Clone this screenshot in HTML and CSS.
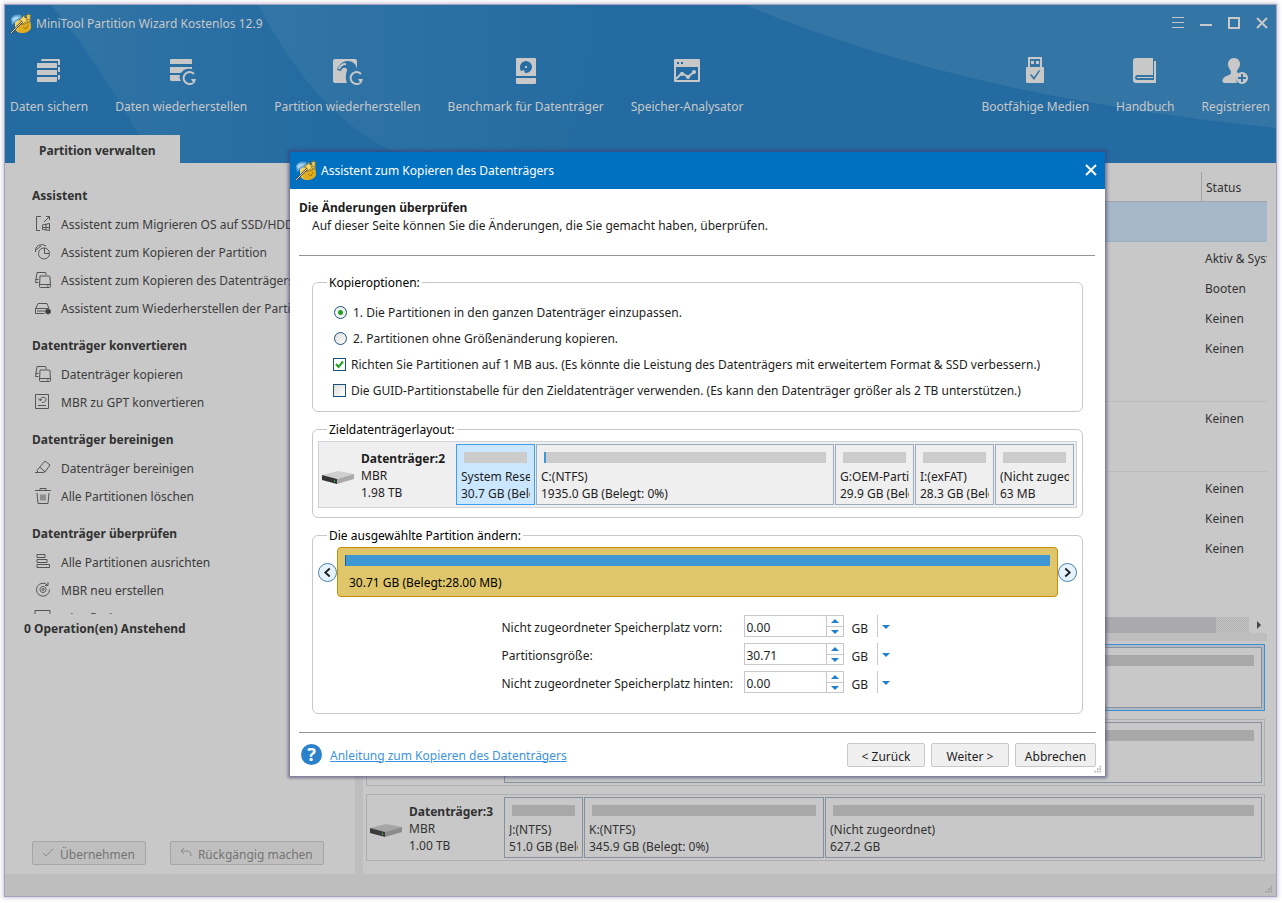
FILE: index.html
```html
<!DOCTYPE html>
<html lang="de">
<head>
<meta charset="utf-8">
<meta name="viewport" content="width=device-width, initial-scale=1">
<title>MiniTool Partition Wizard Kostenlos 12.9</title>
<link rel="stylesheet" href="styles.css">
</head>
<body>
<svg class="sprite" aria-hidden="true">
  <defs>
    <linearGradient id="gold" x1="0" y1="0" x2="1" y2="1"><stop offset="0" stop-color="#ffe680"/><stop offset="1" stop-color="#d99a00"/></linearGradient>
    <symbol id="logo" viewBox="0 0 22 22">
      <path d="M5 9l6-4 9 3 1 7c0 4-5 6-9 6-4 0-6-2-7-4z" fill="url(#gold)"/>
      <path d="M1 7c1-4 6-5 10-4l1 4-5 2-5 4z" fill="#5fa3d4"/>
      <path d="M2 7c2-3 5-3 8-2L6 8l-3 2z" fill="#a9d3ec"/>
      <path d="M9 13c4 1 8 0 11-3l1 5c-1 4-8 7-13 4z" fill="#dfae20"/>
      <path d="M9 12c4 1 8 0 11-3" stroke="#9c7412" stroke-width="1" fill="none"/>
      <path d="M1 21L14 8" stroke="#4c4a42" stroke-width="2"/>
      <path d="M1 21L14 8" stroke="#cfcbbd" stroke-width="1"/>
      <path d="M14 3l1 3 3-1-2 3 2 2-3 0-2 2-1-3-3-1 3-2z" fill="#f5d964" stroke="#7a6224" stroke-width=".6"/>
      <path d="M18 1l1 2 2 0-1 2 1 3-2-1-2 1 0-3-1-2 2 0z" fill="#eccb52" stroke="#7a6224" stroke-width=".4"/>
      <path d="M13 15l3 2 2-4" stroke="#a87800" fill="none"/>
    </symbol>
    <symbol id="hdd" viewBox="0 0 32 14">
      <path d="M0 4L16 0l16 3-17 5z" fill="var(--hdd-top)"/>
      <path d="M0 4l15 4v5L0 9z" fill="var(--hdd-front)"/>
      <path d="M15 8l17-5v5l-17 5z" fill="var(--hdd-side)"/>
      <path d="M12 9h1v2h-1z" fill="#2fb02f"/>
    </symbol>
    <symbol id="copy" viewBox="0 0 18 18">
      <path d="M12 4V2.500a1 1 0 0 0-1-1H3L1.500 11.500h3M1.500 8.500h3M6 5h9a1 1 0 0 1 1 1l.5 9.500a1 1 0 0 1-1 1h-9a1 1 0 0 1-1-1zM5 13.500h11.500M13 15h1.500"/>
    </symbol>
    <symbol id="resize" viewBox="0 0 12 12"><path d="M9 1h2v2H9zM6 4h2v2H6zM9 4h2v2H9zM3 7h2v2H3zM6 7h2v2H6zM9 7h2v2H9z"/></symbol>
  </defs>
</svg>

<div class="app">
  <header class="header">
    <svg class="swoosh" viewBox="0 0 1271 158" preserveAspectRatio="none" aria-hidden="true">
      <defs>
        <linearGradient id="s1"><stop offset="0" stop-color="#3275a6"/><stop offset="1" stop-color="#246ba1"/></linearGradient>
      </defs>
      <path d="M46 0H320L310 158H150C115 95 80 40 46 0z" fill="url(#s1)"/>
      <path d="M253 0C285 60 325 115 385 145L420 158H560L600 0z" fill="url(#s1)"/>
      <path d="M740 0C850 45 1000 95 1271 123V0z" fill="#3375a5"/>
    </svg>
    <div class="titlebar">
      <svg class="logo"><use href="#logo"/></svg>
      <h1 class="app-title">MiniTool Partition Wizard Kostenlos 12.9</h1>
      <div class="window-controls">
        <button class="win-btn" aria-label="Menü"><svg viewBox="0 0 14 14"><path d="M1 1.500h12M1 6.500h12M1 11.500h12"/></svg></button>
        <button class="win-btn" aria-label="Minimieren"><svg viewBox="0 0 14 14"><path d="M1 9h12" stroke-width="2"/></svg></button>
        <button class="win-btn" aria-label="Maximieren"><svg viewBox="0 0 14 14"><path d="M2 2h10v10H2z" stroke-width="2"/></svg></button>
        <button class="win-btn" aria-label="Schließen"><svg viewBox="0 0 14 14"><path d="M2 2l10 10M12 2L2 12" stroke-width="2"/></svg></button>
      </div>
    </div>
    <nav class="toolbar">
      <button class="tool"><svg viewBox="0 0 28 28"><path d="M7 2h17a1 1 0 0 1 1 1v5h-2V4H6V3zM23 10h2v5h-2zM23 18h2v4l-2 1zM2 6h19a1 1 0 0 1 1 1v4H2V7zM2 13h20v5H2zM2 20h20v4a1 1 0 0 1-1 1H3a1 1 0 0 1-1-1z"/></svg>Daten sichern</button>
      <button class="tool"><svg viewBox="0 0 28 28"><path d="M4 2h20a1 1 0 0 1 1 1v4H3V3a1 1 0 0 1 1-1zM3 10h22v2c-4-1-9 0-11 4H3zM3 18h10c-1 2 0 5 1 6H4l-1-1z"/><path class="line" d="M27 17a6 6 0 1 0-1 9"/><path d="M24 22h5l-2 5z"/></svg>Daten wiederherstellen</button>
      <button class="tool"><svg viewBox="0 0 28 28"><path fill-rule="evenodd" d="M2 2h20a2 2 0 0 1 2 2v9c0-6-5-9-9-9-6 0-10 5-11 9l4 1c1-4 5-4 6-1-1 4-2 8 0 13H2a2 2 0 0 1-2-2V4a2 2 0 0 1 2-2z"/><path class="line" d="M6 12c1-3 4-5 7-5"/><circle cx="12" cy="13" r="2"/><path class="line" d="M28 17a6 6 0 1 0-1 9"/><path d="M25 22h5l-2 5z"/></svg>Partition wiederherstellen</button>
      <button class="tool"><svg viewBox="0 0 28 28"><path fill-rule="evenodd" d="M5 1h18a1 1 0 0 1 1 1v17H4V2a1 1 0 0 1 1-1zM8 10a6 6 0 1 1 6 6h-1l-1-3-3 1a6 6 0 0 1-1-4zM4 21h20v5a1 1 0 0 1-1 1H5a1 1 0 0 1-1-1z"/><path d="M13 9h2v2h-2z"/></svg>Benchmark für Datenträger</button>
      <button class="tool"><svg viewBox="0 0 28 28"><path fill-rule="evenodd" d="M2 2h24a1 1 0 0 1 1 1v21a1 1 0 0 1-1 1H2a1 1 0 0 1-1-1V3a1 1 0 0 1 1-1zM4 5v2h2V5zM8 5v2h2V5zM3 10v13h22V10z"/><path class="line" d="M3 22l6-6 6 4 7-6"/><circle cx="9" cy="17" r="2"/><circle cx="15" cy="20" r="2"/><circle cx="21" cy="15" r="2"/></svg>Speicher-Analysator</button>
      <span class="spacer"></span>
      <button class="tool"><svg viewBox="0 0 28 28"><path fill-rule="evenodd" d="M7 0h14v10h1a1 1 0 0 1 1 1v14a1 1 0 0 1-1 1H6a1 1 0 0 1-1-1V11a1 1 0 0 1 1-1h1zM9 2v8h10V2zM9 18l4 5 6-9-1-1-5 7-3-3z"/><path d="M10 4h3v3h-3zM15 4h3v3h-3z"/></svg>Bootfähige Medien</button>
      <button class="tool"><svg viewBox="0 0 28 28"><path fill-rule="evenodd" d="M5 1h17v17H6c-2 0-3 5 0 5h17V4h2v22H5c-2 0-3-1-3-3V4c0-2 1-3 3-3z"/><path d="M6 20h16v1H6z"/></svg>Handbuch</button>
      <button class="tool"><svg viewBox="0 0 28 28"><path d="M12 1c4 0 6 3 6 6 0 4-3 5-3 8l2 2c-3 2-3 6-2 9H3c-4 0-3-5 1-7 3-1 5-1 5-4 0-2-3-4-3-8 0-3 2-6 6-6z"/><path fill-rule="evenodd" d="M20 15a6 6 0 1 1 0 12 6 6 0 0 1 0-12zM19 17v3h-3v2h3v3h2v-3h3v-2h-3v-3z"/></svg>Registrieren</button>
    </nav>
    <div class="tabs"><button class="tab">Partition verwalten</button></div>
  </header>

  <main class="main">
    <aside class="sidebar">
      <div class="actions">
        <section class="group">
          <h2>Assistent</h2>
          <a href="#"><svg viewBox="0 0 18 18"><path d="M7 1.500H2.500v14H6M10 7l5-5M12 1.500h3.500V5M8.500 10l7-1.500v7l-7-1zM12 9v6M8.500 12.500h7"/></svg>Assistent zum Migrieren OS auf SSD/HDD</a>
          <a href="#"><svg viewBox="0 0 18 18"><path d="M1.500 9A6.500 6.500 0 0 1 12 3M2 7l5-4"/><circle cx="10" cy="10.500" r="5.500"/><path d="M10.500 5v5.500H15"/></svg>Assistent zum Kopieren der Partition</a>
          <a href="#"><svg><use href="#copy"/></svg>Assistent zum Kopieren des Datenträgers</a>
          <a href="#"><svg viewBox="0 0 18 18"><path d="M4 4.500h9l2 5M4 4.500L1.500 10v4.500h9M1.500 9.500h13M3 12h8"/><circle cx="14" cy="12.500" r="2.500" fill="#3c3c3c"/></svg>Assistent zum Wiederherstellen der Partition</a>
        </section>
        <section class="group">
          <h2>Datenträger konvertieren</h2>
          <a href="#"><svg><use href="#copy"/></svg>Datenträger kopieren</a>
          <a href="#"><svg viewBox="0 0 18 18"><path d="M1.500 1.500h13v14h-13zM4 12.500h8M6 7.500c0-4 6-4 6-1 0 2-2 3-4 3M4.500 5.500l1.500 2 2-1"/></svg>MBR zu GPT konvertieren</a>
        </section>
        <section class="group">
          <h2>Datenträger bereinigen</h2>
          <a href="#"><svg viewBox="0 0 18 18"><path d="M5 9l6-7 5 4-5 7-3 .5H4l-1-2zM6 8.500l5 4M1 13.500h7"/></svg>Datenträger bereinigen</a>
          <a href="#"><svg viewBox="0 0 18 18"><path d="M1 3.500h16M6 3V1.500h6V3M3 6l1 10.500h10L15 6M7 7.500v6M9 7.500v6M11 7.500v6"/></svg>Alle Partitionen löschen</a>
        </section>
        <section class="group">
          <h2>Datenträger überprüfen</h2>
          <a href="#"><svg viewBox="0 0 18 18"><path d="M3 1.500h8v3H3zM3 6.500h10v3H3zM3 11.500h12.500v3H3z"/></svg>Alle Partitionen ausrichten</a>
          <a href="#"><svg viewBox="0 0 18 18"><path d="M13.500 4a6.500 6.500 0 1 0 2 4.500M14 1v3.500h-3M9 5.500a3 3 0 1 0 .01 0z"/><circle cx="9" cy="8.500" r="1"/></svg>MBR neu erstellen</a>
          <a href="#"><svg viewBox="0 0 18 18"><path d="M1 1.500h15v13H1z"/></svg>Oberflächentest</a>
        </section>
      </div>
      <div class="pending">
        <h2>0 Operation(en) Anstehend</h2>
        <div class="pending-buttons">
          <button class="btn-dim" disabled><svg viewBox="0 0 12 12"><path d="M1 6l3 3 7-7"/></svg>Übernehmen</button>
          <button class="btn-dim" disabled><svg viewBox="0 0 12 12"><path d="M4 1L1 4l3 3M1 4h6c3 0 4 2 4 5"/></svg>Rückgängig machen</button>
        </div>
      </div>
    </aside>
    <div class="splitter"></div>
    <section class="content">
      <div class="table-wrap">
        <table class="parts">
          <thead><tr><th></th><th class="status">Status</th></tr></thead>
          <tbody>
            <tr class="disk-row selected"><td colspan="2"></td></tr>
            <tr><td></td><td>Aktiv &amp; System</td></tr>
            <tr><td></td><td>Booten</td></tr>
            <tr><td></td><td>Keinen</td></tr>
            <tr><td></td><td>Keinen</td></tr>
            <tr class="disk-row"><td colspan="2"></td></tr>
            <tr><td></td><td>Keinen</td></tr>
            <tr class="disk-row"><td colspan="2"></td></tr>
            <tr><td></td><td>Keinen</td></tr>
            <tr><td></td><td>Keinen</td></tr>
            <tr><td></td><td>Keinen</td></tr>
          </tbody>
        </table>
      </div>
      <div class="scrollbar"><span class="thumb"></span><span class="track"></span><svg viewBox="0 0 18 16"><path d="M8 4l4 4-4 4z"/></svg></div>
      <div class="hsplit"></div>
      <div class="diskmap">
        <div class="disk active">
          <div class="disk-info"></div>
          <div class="part wide"><span class="bar"></span></div>
        </div>
        <div class="disk">
          <div class="disk-info"></div>
          <div class="part wide"><span class="bar"></span></div>
        </div>
        <div class="disk">
          <div class="disk-info"><svg class="hdd"><use href="#hdd"/></svg><p><b>Datenträger:3</b><br>MBR<br>1.00 TB</p></div>
          <div class="part small"><span class="bar"></span><p>J:(NTFS)<br>51.0 GB (Belegt: 0%)</p></div>
          <div class="part mid"><span class="bar"></span><p>K:(NTFS)<br>345.9 GB (Belegt: 0%)</p></div>
          <div class="part wide"><span class="bar"></span><p>(Nicht zugeordnet)<br>627.2 GB</p></div>
        </div>
      </div>
    </section>
  </main>
  <footer class="statusbar"><svg class="grip"><use href="#resize"/></svg></footer>
</div>

<div class="dialog" role="dialog" aria-labelledby="dlg-title">
  <div class="dlg-bar">
    <svg class="logo"><use href="#logo"/></svg>
    <h2 id="dlg-title">Assistent zum Kopieren des Datenträgers</h2>
    <button class="win-btn close" aria-label="Dialog schließen"><svg viewBox="0 0 14 14"><path d="M2 2l10 10M12 2L2 12" stroke-width="2"/></svg></button>
  </div>
  <div class="dlg-head">
    <h3>Die Änderungen überprüfen</h3>
    <p>Auf dieser Seite können Sie die Änderungen, die Sie gemacht haben, überprüfen.</p>
  </div>
  <div class="dlg-body">
    <fieldset class="options">
      <legend>Kopieroptionen:</legend>
      <label class="opt"><input type="radio" name="mode" checked>1. Die Partitionen in den ganzen Datenträger einzupassen.</label>
      <label class="opt"><input type="radio" name="mode">2. Partitionen ohne Größenänderung kopieren.</label>
      <label class="opt"><input type="checkbox" checked>Richten Sie Partitionen auf 1 MB aus. (Es könnte die Leistung des Datenträgers mit erweitertem Format &amp; SSD verbessern.)</label>
      <label class="opt"><input type="checkbox">Die GUID-Partitionstabelle für den Zieldatenträger verwenden. (Es kann den Datenträger größer als 2 TB unterstützen.)</label>
    </fieldset>
    <fieldset class="layout">
      <legend>Zieldatenträgerlayout:</legend>
      <div class="disk">
        <div class="disk-info"><svg class="hdd"><use href="#hdd"/></svg><p><b>Datenträger:2</b><br>MBR<br>1.98 TB</p></div>
        <div class="part small picked"><span class="bar"></span><p>System Reserved<br>30.7 GB (Belegt: 0%)</p></div>
        <div class="part wide"><span class="bar used"></span><p>C:(NTFS)<br>1935.0 GB (Belegt: 0%)</p></div>
        <div class="part small"><span class="bar"></span><p>G:OEM-Partition<br>29.9 GB (Belegt: 0%)</p></div>
        <div class="part small"><span class="bar"></span><p>I:(exFAT)<br>28.3 GB (Belegt: 0%)</p></div>
        <div class="part small"><span class="bar"></span><p>(Nicht zugeordnet)<br>63 MB</p></div>
      </div>
    </fieldset>
    <fieldset class="resize">
      <legend>Die ausgewählte Partition ändern:</legend>
      <div class="slider">
        <button class="round" aria-label="Links"><svg viewBox="0 0 19 19"><path d="M12 5L7 9.500 12 14"/></svg></button>
        <div class="gold"><span></span><p>30.71 GB (Belegt:28.00 MB)</p></div>
        <button class="round" aria-label="Rechts"><svg viewBox="0 0 19 19"><path d="M7 5l5 4.500L7 14"/></svg></button>
      </div>
      <div class="sizes">
        <label for="before">Nicht zugeordneter Speicherplatz vorn:</label>
        <div class="spin"><input id="before" type="text" value="0.00"><div class="steps"><button aria-label="Mehr"><svg viewBox="0 0 8 4"><path d="M0 4l4-4 4 4z"/></svg></button><button aria-label="Weniger"><svg viewBox="0 0 8 4"><path d="M0 0h8L4 4z"/></svg></button></div></div>
        <div class="unit"><select aria-label="Einheit vorn"><option>GB</option></select><svg viewBox="0 0 8 4"><path d="M0 0h8L4 4z"/></svg></div>
        <label for="size">Partitionsgröße:</label>
        <div class="spin"><input id="size" type="text" value="30.71"><div class="steps"><button aria-label="Mehr"><svg viewBox="0 0 8 4"><path d="M0 4l4-4 4 4z"/></svg></button><button aria-label="Weniger"><svg viewBox="0 0 8 4"><path d="M0 0h8L4 4z"/></svg></button></div></div>
        <div class="unit"><select aria-label="Einheit Größe"><option>GB</option></select><svg viewBox="0 0 8 4"><path d="M0 0h8L4 4z"/></svg></div>
        <label for="after">Nicht zugeordneter Speicherplatz hinten:</label>
        <div class="spin"><input id="after" type="text" value="0.00"><div class="steps"><button aria-label="Mehr"><svg viewBox="0 0 8 4"><path d="M0 4l4-4 4 4z"/></svg></button><button aria-label="Weniger"><svg viewBox="0 0 8 4"><path d="M0 0h8L4 4z"/></svg></button></div></div>
        <div class="unit"><select aria-label="Einheit hinten"><option>GB</option></select><svg viewBox="0 0 8 4"><path d="M0 0h8L4 4z"/></svg></div>
      </div>
    </fieldset>
  </div>
  <div class="dlg-foot">
    <span class="help">?</span>
    <a href="#">Anleitung zum Kopieren des Datenträgers</a>
    <span class="spacer"></span>
    <button class="btn">&lt; Zurück</button>
    <button class="btn">Weiter &gt;</button>
    <button class="btn wide">Abbrechen</button>
  </div>
  <svg class="grip"><use href="#resize"/></svg>
</div>
</body>
</html>
```
FILE: styles.css
```css
* { box-sizing: border-box; }
body {
  margin: 0;
  background: #fff;
  font: 12px/18px "Noto Sans", sans-serif;
  color: #323232;
}
h1, h2, h3, p { margin: 0; font-size: inherit; }
button, input, select { font: inherit; color: inherit; }
button { border: 0; padding: 0; background: none; }
svg { display: block; flex: none; }
.sprite { position: absolute; width: 0; height: 0; }
.spacer { flex: 1; }

.app {
  display: flex;
  flex-direction: column;
  height: calc(100vh - 12px);
  margin: 5px 6px 7px 5px;
  overflow: hidden;
  background: #c8c8c8;
  box-shadow: 0 0 0 1px #a3a3bd, 0 0 4px 2px #c6c6da;
}

.header { position: relative; background: #246ba1; color: #c8c8c8; flex: none; }
.swoosh { position: absolute; inset: 0; width: 100%; height: 100%; }
.titlebar, .toolbar, .tabs { position: relative; display: flex; }
.titlebar { align-items: center; height: 36px; padding: 0 6px 0 5px; gap: 4px; }
.logo { width: 22px; height: 22px; }
.app-title { font-weight: 400; flex: 1; padding-top: 2px; }
.window-controls { display: flex; gap: 14px; margin-right: 1px; }
.win-btn svg { width: 14px; height: 14px; fill: none; stroke: currentColor; }
.toolbar { gap: 27px; padding: 16px 6px 0 5px; height: 94px; white-space: nowrap; }
.tool { display: flex; flex-direction: column; align-items: center; gap: 13px; height: 60px; }
.tool svg { width: 28px; height: 28px; fill: #c8c8c8; overflow: visible; }
.tool .line { fill: none; stroke: #c8c8c8; stroke-width: 2; }
.tabs { padding-left: 10px; }
.tab { height: 28px; padding: 4px 24px 0; background: #c8c8c8; color: #323232; font-weight: 700; }

.main { display: flex; flex: 1; min-height: 0; }
.sidebar { width: 350px; display: flex; flex-direction: column; flex: none; }
.actions { flex: 1; min-height: 0; overflow: hidden; padding: 17px 0 0 27px; }
.group { margin-bottom: 8px; }
.group h2 { height: 30px; line-height: 32px; }
.group a { display: flex; align-items: center; gap: 9px; height: 28px; padding: 2px 0 0 2px; color: #3c3c3c; text-decoration: none; white-space: nowrap; }
.group svg { width: 18px; height: 18px; margin-bottom: 2px; fill: none; stroke: #555; }
.pending { flex: none; height: 260px; display: flex; flex-direction: column; justify-content: space-between; padding: 6px 0 9px 19px; }
.pending-buttons { display: flex; gap: 24px; padding-left: 8px; }
.btn-dim { display: flex; align-items: center; gap: 6px; height: 24px; padding: 4px 10px 0 9px; border: 1px solid #a6a6a6; border-radius: 2px; background: #bfbfbf; color: #747474; }
.btn-dim svg { width: 12px; height: 12px; margin-bottom: 4px; fill: none; stroke: #8a8a8a; stroke-width: 1; }
.splitter { width: 8px; background: #bebebe; flex: none; }

.content { flex: 1; min-width: 0; display: flex; flex-direction: column; padding-right: 9px; }
.table-wrap { flex: 1; min-height: 0; overflow: hidden; }
.parts { width: 100%; border-collapse: collapse; table-layout: fixed; }
.parts th { height: 38px; padding: 12px 0 0; border-bottom: 1px solid #a4a4a4; font-weight: 400; text-align: left; }
.parts .status { width: 66px; padding-left: 5px; background: linear-gradient(#a4a4a4, #a4a4a4) 0 9px / 1px 100% no-repeat; }
.parts td { height: 30px; padding: 6px 0 0 4px; white-space: nowrap; overflow: hidden; }
.parts .disk-row td { height: 40px; border-bottom: 1px solid #bcbcbc; }
.parts .selected td { background: #a6b7c9; border-bottom-color: #9fb0c2; }
.scrollbar { display: flex; height: 16px; flex: none; }
.thumb { flex: 1; background: #aaaaac; }
.track { width: 33px; background: repeating-conic-gradient(#b0b0b0 0 25%, #c6c6c6 0 50%) 0 0 / 2px 2px; }
.scrollbar svg { width: 18px; height: 16px; fill: #444; }
.hsplit { height: 8px; background: #bebebe; flex: none; }
.diskmap { display: flex; flex-direction: column; gap: 8px; padding: 3px 2px 13px 3px; flex: none; }

.disk { --hdd-top: #a6a6a6; --hdd-front: #3c3c3c; --hdd-side: #8c8c8c; display: flex; gap: 1px; height: 67px; padding: 2px; border: 1px solid #adadb2; line-height: 17px; white-space: nowrap; }
.disk.active { border-color: #3f8fcf; background: #adbbc9; }
.disk.active .part, .disk.active .disk-info { background: #c8c8c8; }
.disk-info { display: flex; align-items: center; gap: 7px; width: 134px; padding: 2px 0 0 1px; flex: none; }
.hdd { width: 32px; height: 14px; margin-top: 4px; }
.part { height: 61px; padding: 7px 4px 0; border: 1px solid #87919e; overflow: hidden; }
.part.small { width: 79px; flex: none; }
.part.mid { width: 240px; flex: none; }
.part.wide { flex: 1; min-width: 0; }
.part p { margin-top: 5px; overflow: hidden; }
.bar { display: block; height: 11px; margin: 0 3px; background: #a8a8a8; }

.dialog {
  position: absolute;
  left: 290px;
  right: 177px;
  top: 152px;
  display: flex;
  flex-direction: column;
  background: #fff;
  color: #1e1e1e;
  box-shadow: 0 0 3px 2px rgba(60, 60, 110, .6);
}
.dlg-bar { display: flex; align-items: center; gap: 4px; height: 37px; padding: 0 7px 2px 5px; background: #0070c0; color: #fff; }
.dlg-bar h2 { flex: 1; font-weight: 400; padding-top: 2px; }
.dlg-head { height: 67px; margin: 0 10px 0 9px; padding-top: 10px; border-bottom: 1px solid #949494; }
.dlg-head p { padding-left: 13px; }
.dlg-body { display: flex; flex-direction: column; gap: 8px; padding: 17px 22px 18px; }
fieldset { margin: 0; min-width: 0; border: 1px solid #c8c8c8; border-radius: 6px; }
legend { height: 18px; padding: 0 2px; margin-left: 9px; line-height: 20px; color: #000; }
.options { padding: 8px 5px; }
.opt { display: flex; align-items: center; height: 26px; gap: 5px; padding: 2px 0 0 15px; white-space: nowrap; }
.opt input { appearance: none; flex: none; width: 13px; height: 13px; margin: 0 0 2px; border: 1px solid #1c5180; background: linear-gradient(135deg, #dcdcd8, #fff); }
.opt input[type="radio"] { border-radius: 50%; margin: 0 1px 2px; }
.opt input[type="radio"]:checked { background: radial-gradient(circle, #22a122 0 2px, #f2f2f0 3px); }
.opt input[type="checkbox"]:checked { background: url("data:image/svg+xml,%3Csvg xmlns='http://www.w3.org/2000/svg' viewBox='0 0 11 11'%3E%3Cpath d='M2 5l2.500 3L9 2.500' fill='none' stroke='%2321a121' stroke-width='2'/%3E%3C/svg%3E") #fff; }
.layout { padding: 3px 5px 9px; }
.dialog .disk { --hdd-top: #cfcfcf; --hdd-front: #333; --hdd-side: #aaa; border-color: #cfd3d9; background: #efefef; }
.dialog .part { border-color: #9bacc1; }
.dialog .picked { border-color: #3aa0f0; background: #cbe7ff; }
.dialog .bar { background: #ccc; }
.dialog .used { border-left: 2px solid #3e97d3; }
.resize { padding: 3px 5px 20px; }
.slider { display: flex; align-items: center; }
.round { width: 19px; height: 19px; flex: none; border: 1px solid #4a83ad; border-radius: 50%; background: #e6f3fc; }
.round svg { width: 17px; height: 17px; fill: none; stroke: #1e1e1e; stroke-width: 2; }
.gold { flex: 1; height: 50px; padding: 7px 7px 0; border: 1px solid #c78e08; border-radius: 4px; background: #dfc66b; color: #000; }
.gold span { display: block; height: 11px; background: #3e97d3; border-left: 1px solid #1c6199; }
.gold p { padding: 8px 4px 0; }
.sizes { display: grid; grid-template-columns: 242px 100px 46px; row-gap: 6px; justify-content: center; margin: 18px 4px 0 0; line-height: 22px; }
.sizes label { white-space: nowrap; padding-top: 2px; height: 22px; }
.spin { display: flex; height: 22px; border: 1px solid #c8c8c8; }
.spin input { flex: 1; min-width: 0; border: 0; padding: 4px 0 0 2px; background: none; }
.steps { width: 17px; display: grid; grid-template-rows: 1fr 1fr; border-left: 1px solid #c8c8c8; }
.steps button { display: grid; place-items: center; }
.steps button + button { border-top: 1px solid #c8c8c8; }
.steps svg, .unit svg { width: 8px; height: 4px; fill: #1f7fcc; }
.unit { position: relative; height: 22px; padding-left: 8px; }
.unit select { appearance: none; width: 38px; height: 22px; padding: 3px 0 0; border: 0; background: linear-gradient(#c8c8c8, #c8c8c8) 25px 0 / 1px 100% no-repeat; }
.unit svg { position: absolute; right: 0; top: 10px; pointer-events: none; }
.dlg-foot { display: flex; align-items: center; gap: 6px; height: 44px; margin: 0 9px; border-top: 1px solid #949494; }
.help { width: 21px; height: 21px; margin: 0 2px; border-radius: 50%; background: #2b82cb; color: #fff; font-weight: 700; font-size: 18px; line-height: 21px; text-align: center; }
.dlg-foot a { padding-top: 2px; color: #3e93e0; }
.btn { height: 24px; min-width: 78px; padding: 4px 8px 0; border: 1px solid #c8c8c8; border-radius: 2px; background: #efefef; }
.btn.wide { min-width: 81px; }
.grip { width: 12px; height: 10px; fill: #a0a0a0; }
.dialog .grip { position: absolute; right: 2px; bottom: 1px; fill: #b8b8b8; }
.statusbar { display: flex; align-items: flex-end; justify-content: flex-end; height: 22px; padding: 0 2px 1px 0; background: #bebebe; flex: none; }
```
